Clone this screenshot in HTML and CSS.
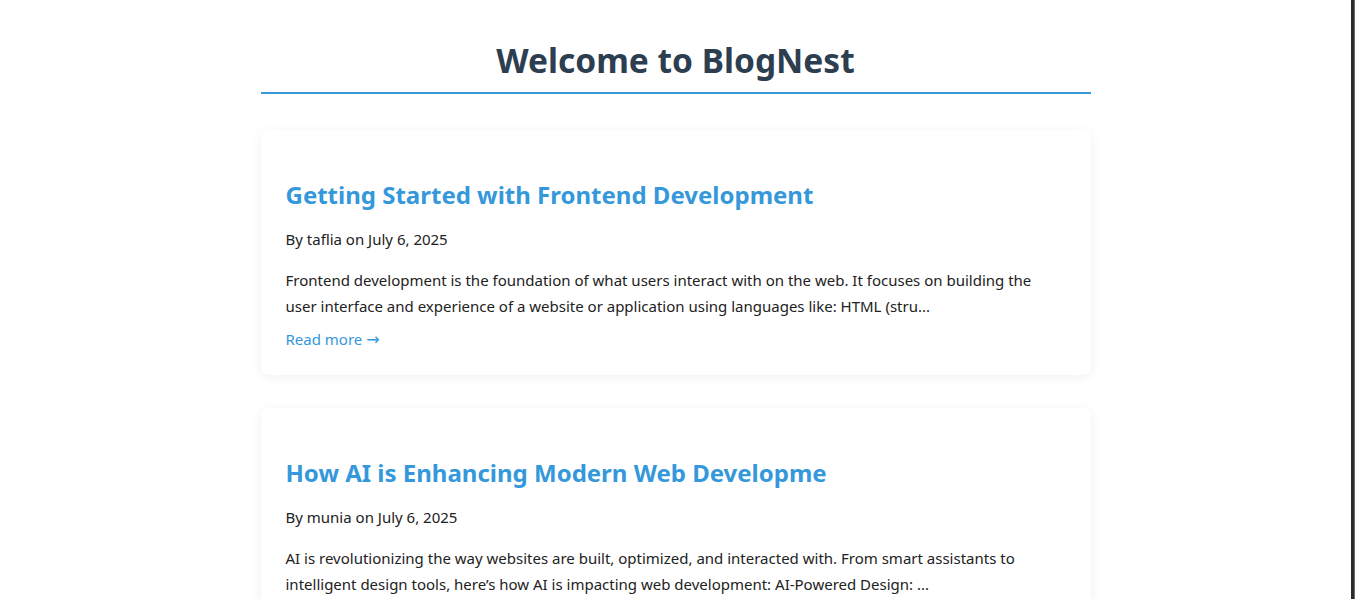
FILE: index.html
```html
<!DOCTYPE html>
<html lang="en">
<head>
<meta charset="utf-8">
<title>BlogNest</title>
<link rel="stylesheet" href="styles.css">
</head>
<body>
<div class="page">
  <main class="container">
    <h1 class="page-title">Welcome to BlogNest</h1>
    <article class="post-card">
      <h2 class="post-title">Getting Started with Frontend Development</h2>
      <p class="post-meta">By taflia on July 6, 2025</p>
      <p class="post-excerpt">Frontend development is the foundation of what users interact with on the web. It focuses on building the user interface and experience of a website or application using languages like: HTML (stru...</p>
      <a class="read-more" href="#">Read more <span class="arrow">→</span></a>
    </article>
    <article class="post-card">
      <h2 class="post-title">How AI is Enhancing Modern Web Developme</h2>
      <p class="post-meta">By munia on July 6, 2025</p>
      <p class="post-excerpt">AI is revolutionizing the way websites are built, optimized, and interacted with. From smart assistants to intelligent design tools, here’s how AI is impacting web development: AI-Powered Design: ...</p>
      <a class="read-more" href="#">Read more <span class="arrow">→</span></a>
    </article>
  </main>
  <div class="edge"></div>
</div>
</body>
</html>
```
FILE: styles.css
```css
html, body {
  margin: 0;
  padding: 0;
  background: #ffffff;
  height: 100%;
  overflow: hidden;
}
body {
  font-family: "Noto Sans", "Open Sans", sans-serif;
  color: #222222;
}
.page {
  display: flex;
  min-height: 100%;
}
.container {
  flex: 1;
  display: flex;
  flex-direction: column;
  align-items: center;
}
.page-title, .post-card {
  width: 830px;
  box-sizing: border-box;
}
.edge {
  width: 4px;
  background: #2b2b2b;
  border-right: 1px solid #6a6a6a;
  box-sizing: border-box;
}
.page-title {
  margin: 38px 0 36px;
  padding-bottom: 10px;
  text-align: center;
  font-size: 33.5px;
  line-height: 44px;
  font-weight: 700;
  color: #2c3e50;
  border-bottom: 2px solid #3498db;
}
.post-card {
  background: #fff;
  border-radius: 8px;
  box-shadow: 0 2px 12px rgba(0, 0, 0, 0.06);
  padding: 24px 25px 22px;
  margin-bottom: 33px;
}
.post-title {
  margin: 25px 0 16px;
  font-size: 24px;
  line-height: 31px;
  font-weight: 700;
  color: #3498db;
}
.post-meta {
  margin: 0 0 15px;
  font-size: 15px;
  line-height: 26px;
}
.post-excerpt {
  margin: 0 0 7px;
  font-size: 15px;
  line-height: 26px;
}
.read-more {
  display: inline-block;
  font-size: 15px;
  line-height: 26px;
  color: #3498db;
  text-decoration: none;
}
.arrow {
  font-family: "DejaVu Sans", sans-serif;
  font-size: 16px;
}
```
